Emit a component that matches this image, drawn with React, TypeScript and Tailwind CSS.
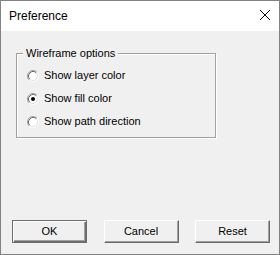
import { useState } from "react";

const options = ["Show layer color", "Show fill color", "Show path direction"];

function Radio({ checked }: { checked: boolean }) {
    return (
        <svg width="12" height="12" viewBox="0 0 12 12" className="shrink-0">
            <circle cx="6" cy="6" r="4.5" fill="white" />
            <path d="M2.1 9.9 A5.5 5.5 0 0 1 9.9 2.1" fill="none" stroke="#a0a0a0" />
            <path d="M9.9 2.1 A5.5 5.5 0 0 1 2.1 9.9" fill="none" stroke="#ffffff" />
            <path d="M2.82 9.18 A4.5 4.5 0 0 1 9.18 2.82" fill="none" stroke="#696969" />
            <path d="M9.18 2.82 A4.5 4.5 0 0 1 2.82 9.18" fill="none" stroke="#e3e3e3" />
            {checked && <circle cx="6" cy="6" r="2" fill="#000" />}
        </svg>
    );
}

function Button({ label, isDefault }: { label: string; isDefault?: boolean }) {
    return (
        <button
            className={
                isDefault
                    ? "w-[75px] h-[23px] bg-[#f0f0f0] border border-[#6d6d6d] shadow-[inset_1px_1px_0_#ffffff,inset_-1px_-1px_0_#6d6d6d,inset_-2px_-2px_0_#a0a0a0] text-[11px] text-black leading-none"
                    : "w-[75px] h-[23px] bg-[#f0f0f0] border border-t-white border-l-white border-r-[#696969] border-b-[#696969] shadow-[inset_-1px_-1px_0_#a0a0a0] text-[11px] text-black leading-none"
            }
        >
            {label}
        </button>
    );
}

export default function App() {
    const [selected, setSelected] = useState(1);

    return (
        <div
            className="w-[280px] h-[255px] flex flex-col border border-[#838383] bg-[#f0f0f0]"
            style={{ fontFamily: '"Liberation Sans", Arial, sans-serif' }}
        >
            {/* title bar */}
            <div className="h-[30px] bg-white flex items-center justify-between pl-[8px] pr-[9px]">
                <span className="text-[12px] text-black">Preference</span>
                <svg width="10" height="10" viewBox="0 0 10 10" className="mb-[2px]">
                    <path d="M0 0 L10 10 M10 0 L0 10" stroke="#000" strokeWidth="1" />
                </svg>
            </div>

            <div className="flex-1 flex flex-col">
                {/* group box */}
                <div className="mt-[22px] ml-[15px] w-[200px] h-[85px] border border-[#a0a0a0] shadow-[1px_1px_0_#ffffff,inset_1px_1px_0_#ffffff] flex flex-col">
                    <span className="-mt-[7px] ml-[6px] px-[3px] w-fit bg-[#f0f0f0] text-[11px] leading-[13px] text-black">
                        Wireframe options
                    </span>
                    <div className="mt-[4px] flex flex-col">
                        {options.map((opt, i) => (
                            <label
                                key={opt}
                                onClick={() => setSelected(i)}
                                className="h-[23px] flex items-center gap-[5px] pl-[10px] text-[11px] text-black"
                            >
                                <Radio checked={selected === i} />
                                {opt}
                            </label>
                        ))}
                    </div>
                </div>

                {/* buttons */}
                <div className="mt-auto mb-[11px] flex justify-between pl-[11px] pr-[9px]">
                    <Button label="OK" isDefault />
                    <Button label="Cancel" />
                    <Button label="Reset" />
                </div>
            </div>
        </div>
    );
}
